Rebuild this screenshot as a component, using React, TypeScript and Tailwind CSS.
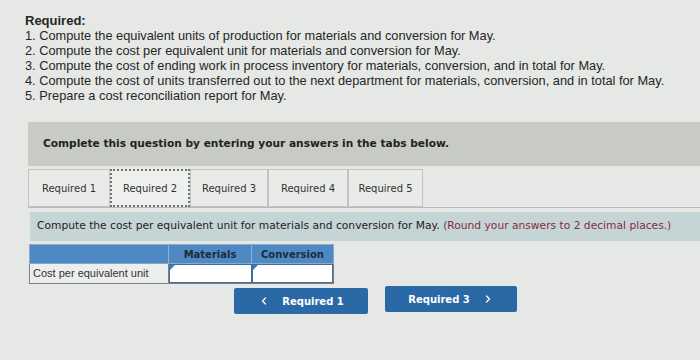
import { ChevronLeft, ChevronRight } from 'lucide-react'

const tabs = [
  { label: 'Required 1', w: 'w-[82px]' },
  { label: 'Required 2', w: 'w-[80px]', active: true },
  { label: 'Required 3', w: 'w-[78px]' },
  { label: 'Required 4', w: 'w-[80px]' },
  { label: 'Required 5', w: 'w-[75px]' },
]

const steps = [
  '1. Compute the equivalent units of production for materials and conversion for May.',
  '2. Compute the cost per equivalent unit for materials and conversion for May.',
  '3. Compute the cost of ending work in process inventory for materials, conversion, and in total for May.',
  '4. Compute the cost of units transferred out to the next department for materials, conversion, and in total for May.',
  '5. Prepare a cost reconciliation report for May.',
]

export default function App() {
  return (
    <div className="w-[700px] h-[360px] overflow-hidden bg-[#e5e8e5] pt-[13px] text-[#262626]">
      {/* Requirements list */}
      <div className="pl-[25px] font-['Liberation_Sans',Arial,sans-serif] text-[12.8px] leading-[15px]">
        <p className="font-bold text-[13px]">Required:</p>
        {steps.map(s => (
          <p key={s}>{s}</p>
        ))}
      </div>

      {/* Instruction banner */}
      <div className="ml-[28px] mt-[19px] h-[44px] bg-[#c8cac6] pl-[15px] flex items-center font-['DejaVu_Sans',Verdana,sans-serif] text-[10.6px] font-bold text-[#222]">
        Complete this question by entering your answers in the tabs below.
      </div>

      {/* Tabs */}
      <div className="ml-[28px] mt-[3px] flex h-[39px] border-b border-[#b7bab7] font-['DejaVu_Sans',Verdana,sans-serif] text-[10px] text-[#333]">
        {tabs.map(t => (
          <div
            key={t.label}
            className={`${t.w} flex items-center justify-center ${
              t.active
                ? 'border-2 border-dotted border-[#6f7370] bg-[#eef0ee]'
                : 'border border-[#c0c3c0] bg-[#e8ebe8]'
            }`}
          >
            {t.label}
          </div>
        ))}
      </div>

      {/* Question panel */}
      <div className="ml-[30px] mt-[4px] h-[29px] bg-[#c5d4d5] pl-[7px] flex items-center font-['DejaVu_Sans',Verdana,sans-serif] text-[10.7px] text-[#222]">
        <span>
          Compute the cost per equivalent unit for materials and conversion for May.{' '}
          <span className="text-[#8a2a42]">(Round your answers to 2 decimal places.)</span>
        </span>
      </div>

      {/* Answer table */}
      <div className="ml-[29px] mt-[3px] w-[305px] font-['DejaVu_Sans',Verdana,sans-serif] text-[10px]">
        <div className="flex h-[20px] bg-[#4f89c4] border border-[#8aa9c8]">
          <div className="w-[139px] border-r border-[#8fb0d2]" />
          <div className="w-[83px] border-r border-[#8fb0d2] flex items-center justify-center font-bold text-[#1d2b3a]">Materials</div>
          <div className="flex-1 flex items-center justify-center font-bold text-[#1d2b3a]">Conversion</div>
        </div>
        <div className="flex h-[20px] border border-t-0 border-[#7d807e]">
          <div className="w-[139px] bg-[#eceeed] flex items-center pl-[3px] font-['Liberation_Sans',Arial,sans-serif] text-[11px] text-[#333] border-r border-[#7d807e]">
            Cost per equivalent unit
          </div>
          <div className="relative w-[83px] bg-white border border-[#3f6f9e]">
            <span className="absolute left-0 top-0 w-0 h-0 border-t-[5px] border-t-[#3d79b6] border-r-[5px] border-r-transparent" />
          </div>
          <div className="relative flex-1 bg-white border border-[#3f6f9e]">
            <span className="absolute left-0 top-0 w-0 h-0 border-t-[5px] border-t-[#3d79b6] border-r-[5px] border-r-transparent" />
          </div>
        </div>
      </div>

      {/* Navigation buttons */}
      <div className="mt-[4px] pl-[234px] flex gap-[17px] font-['DejaVu_Sans',Verdana,sans-serif] text-[10px] font-bold text-white">
        <button className="w-[134px] h-[26px] bg-[#2b69a6] rounded-[2px] flex items-center justify-center gap-[12px]">
          <ChevronLeft size={12} strokeWidth={2.5} />
          <span>Required 1</span>
        </button>
        <button className="w-[132px] h-[26px] -mt-[2px] bg-[#2b69a6] rounded-[2px] flex items-center justify-center gap-[12px]">
          <span>Required 3</span>
          <ChevronRight size={12} strokeWidth={2.5} />
        </button>
      </div>
    </div>
  )
}
